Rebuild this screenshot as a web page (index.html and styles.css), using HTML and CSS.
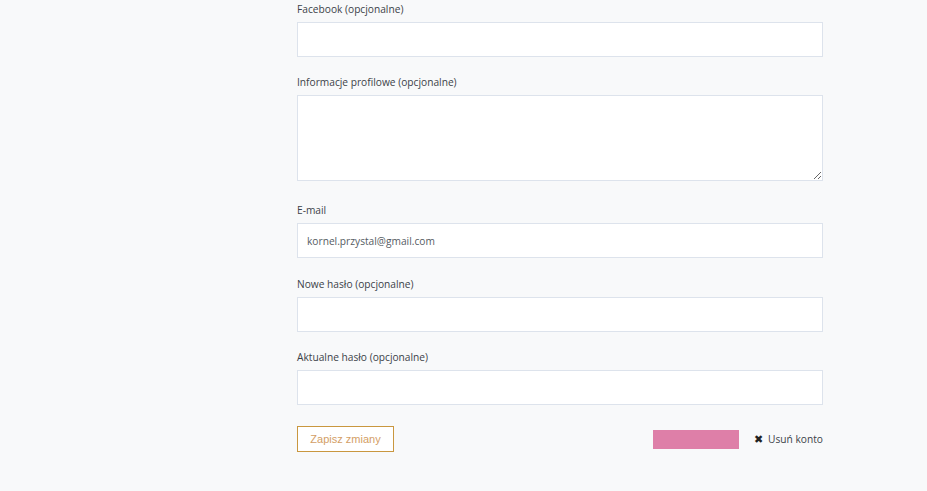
FILE: index.html
```html
<!DOCTYPE html>
<html lang="pl">
<head>
    <meta charset="UTF-8">
    <meta name="viewport" content="width=device-width, initial-scale=1.0">
    <title>Edytuj profil</title>
    <link rel="stylesheet" href="styles.css">
</head>
<body>
    <div class="page">
        <form class="profile-form">
            <div class="form-group">
                <label for="facebook">Facebook (opcjonalne)</label>
                <input type="text" id="facebook" class="field">
            </div>
            <div class="form-group wide-gap">
                <label for="about">Informacje profilowe (opcjonalne)</label>
                <textarea id="about" class="field area"></textarea>
            </div>
            <div class="form-group email-group">
                <label for="email">E-mail</label>
                <input type="text" id="email" class="field" value="kornel.przystal@gmail.com">
            </div>
            <div class="form-group">
                <label for="newPass">Nowe hasło (opcjonalne)</label>
                <input type="password" id="newPass" class="field">
            </div>
            <div class="form-group">
                <label for="curPass">Aktualne hasło (opcjonalne)</label>
                <input type="password" id="curPass" class="field">
            </div>
            <div class="form-actions">
                <button type="button" class="save-btn">Zapisz zmiany</button>
                <div class="danger">
                    <span class="pink-box"></span>
                    <a href="#" class="delete-link"><span class="x">✖</span>Usuń konto</a>
                </div>
            </div>
        </form>
    </div>
</body>
</html>
```

FILE: styles.css
```css
* {
    margin: 0;
    padding: 0;
    box-sizing: border-box;
}

body {
    background-color: #f8f9fa;
    font-family: 'Open Sans', 'Noto Sans', sans-serif;
    color: #343a40;
    font-size: 10.2px;
}

.page {
    padding-left: 297px;
    padding-top: 1px;
    width: 823px;
    min-height: 491px;
}

.profile-form {
    width: 526px;
}

.form-group {
    margin-bottom: 17px;
}

.form-group.wide-gap {
    margin-bottom: 21px;
}

.form-group.email-group {
    margin-bottom: 18px;
}

.form-group label {
    display: block;
    line-height: 16px;
    margin-bottom: 5px;
    color: #3c4248;
}

.field {
    display: block;
    width: 100%;
    height: 35px;
    padding: 0 9px;
    border: 1px solid #dde3ec;
    background: #fff;
    font-family: inherit;
    font-size: 10.2px;
    color: #555b62;
    outline: none;
}

.field.area {
    height: 86px;
    resize: vertical;
}

.form-actions {
    display: flex;
    justify-content: space-between;
    align-items: center;
    margin-top: 21px;
}

.save-btn {
    width: 97px;
    height: 26px;
    background: #fff;
    border: 1px solid #c9973f;
    color: #d39e66;
    font-family: 'Liberation Sans', Arial, sans-serif;
    font-size: 11px;
    cursor: pointer;
}

.danger {
    display: flex;
    align-items: center;
    gap: 15px;
}

.pink-box {
    display: block;
    width: 86px;
    height: 19px;
    background: #de7fa8;
}

.delete-link {
    color: #3c4248;
    text-decoration: none;
    font-size: 10.2px;
}

.delete-link .x {
    font-size: 10.5px;
    margin-right: 5px;
    color: #222;
}
```
